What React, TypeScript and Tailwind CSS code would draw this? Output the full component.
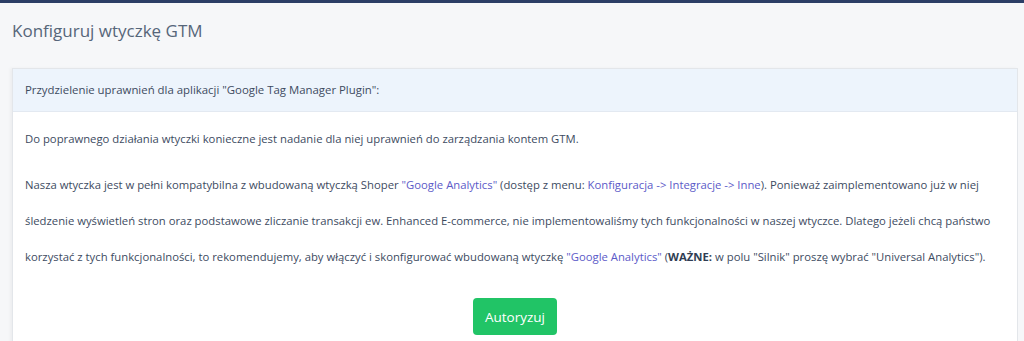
export default function App() {
  return (
    <div className="min-h-[341px] bg-[#f6f7f9] border-t-[3px] border-[#2c3e66] font-['Open_Sans',sans-serif] text-[#3d4b5f]">
      <h1 className="px-3 pt-[16px] pb-[25px] text-[17px] leading-6 text-[#56667a] font-normal">
        Konfiguruj wtyczkę GTM
      </h1>

      <div className="ml-3 mr-[6px] border border-[#e3e6ea] bg-white shadow-[-2px_0_3px_rgba(0,0,0,0.04)]">
        <div className="px-3 h-[43px] flex items-center bg-[#edf4fc] border-b border-[#e3e9f1] text-[11.4px]">
          Przydzielenie uprawnień dla aplikacji "Google Tag Manager Plugin":
        </div>

        <div className="px-3 pt-[9px] pb-4 text-[11.3px] leading-[36px] whitespace-nowrap">
          <p className="mb-[10px]">
            Do poprawnego działania wtyczki konieczne jest nadanie dla niej uprawnień do zarządzania kontem GTM.
          </p>
          <p>
            Nasza wtyczka jest w pełni kompatybilna z wbudowaną wtyczką Shoper{' '}
            <span className="text-[#5b5ac8]">"Google Analytics"</span> (dostęp z menu:{' '}
            <span className="text-[#5b5ac8]">Konfiguracja -&gt; Integracje -&gt; Inne</span>). Ponieważ zaimplementowano już w niej
            <br />
            śledzenie wyświetleń stron oraz podstawowe zliczanie transakcji ew. Enhanced E-commerce, nie implementowaliśmy tych funkcjonalności w naszej wtyczce. Dlatego jeżeli chcą państwo
            <br />
            korzystać z tych funkcjonalności, to rekomendujemy, aby włączyć i skonfigurować wbudowaną wtyczkę{' '}
            <span className="text-[#5b5ac8]">"Google Analytics"</span> (<b className="font-bold text-[#2f3d52]">WAŻNE:</b> w polu "Silnik" proszę wybrać "Universal Analytics").
          </p>

          <div className="mt-[23px] flex justify-center">
            <button className="h-[37px] px-[12px] rounded bg-[#21c466] text-white text-[13.5px]">
              Autoryzuj
            </button>
          </div>
        </div>
      </div>
    </div>
  );
}
